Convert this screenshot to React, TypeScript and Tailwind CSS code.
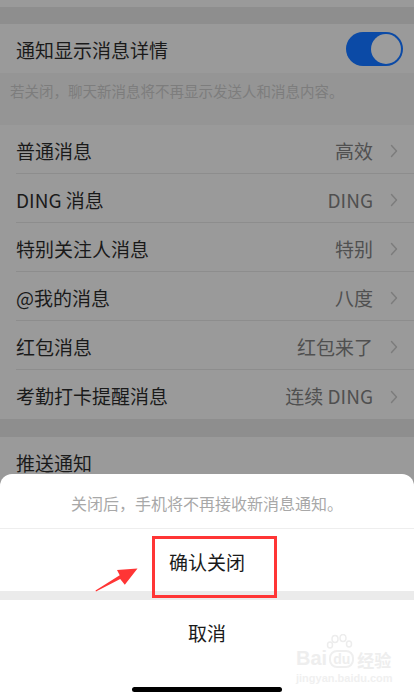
import React from "react";

function Chevron() {
  return (
    <svg width="8" height="14" viewBox="0 0 8 14" className="ml-[17px] shrink-0">
      <polyline points="1.5,1.5 6.5,7 1.5,12.5" fill="none" stroke="#7c7c7c" strokeWidth="1.4" strokeLinecap="round" strokeLinejoin="round" />
    </svg>
  );
}

function Switch() {
  return (
    <div className="w-[57px] h-[34px] rounded-full bg-[#0b4aa6] relative shrink-0">
      <div className="absolute right-[2px] top-[2px] w-[30px] h-[30px] rounded-full bg-[#9c9c9c]" />
    </div>
  );
}

const rows: [string, string][] = [
  ["普通消息", "高效"],
  ["DING 消息", "DING"],
  ["特别关注人消息", "特别"],
  ["@我的消息", "八度"],
  ["红包消息", "红包来了"],
  ["考勤打卡提醒消息", "连续 DING"],
];

export default function App() {
  return (
    <div className="relative w-[414px] h-[693px] overflow-hidden bg-[#8e8e8e] font-['Noto_Sans_CJK_SC','Noto_Sans',sans-serif]">
      {/* previous row bottom */}
      <div className="mt-[-42px] h-[49px] bg-[#9a9a9a] flex items-center justify-end pr-[11px]">
        <Switch />
      </div>
      <div className="h-[17px]" />
      <div className="h-[49px] bg-[#9a9a9a] flex items-center pl-4 pr-[11px]">
        <span className="flex-1 pt-1 text-[19px] text-[#1a1a1a]">通知显示消息详情</span>
        <Switch />
      </div>
      <div className="h-[52px] bg-[#959595] pl-[10px] pt-[7px] text-[14.5px] text-[#7d7d7d]">
        若关闭，聊天新消息将不再显示发送人和消息内容。
      </div>
      <div className="bg-[#9a9a9a] pl-4">
        {rows.map(([t, v], i) => (
          <div
            key={t}
            className={
              i < rows.length - 1
                ? "h-[49px] flex items-center pr-4 pt-1 border-b border-[#8d8d8d]"
                : "h-[49px] flex items-center pr-4 pt-1"
            }
          >
            <span className="flex-1 text-[19px] text-[#1a1a1a]">{t}</span>
            <span className="text-[19px] text-[#505050]">{v}</span>
            <Chevron />
          </div>
        ))}
      </div>
      <div className="h-[18px]" />
      <div className="h-[49px] bg-[#9a9a9a] flex items-center pl-4 pt-1">
        <span className="text-[19px] text-[#1a1a1a]">推送通知</span>
      </div>

      {/* action sheet */}
      <div className="absolute left-0 right-0 bottom-0 h-[219px] bg-white rounded-t-[12px] flex flex-col">
        <div className="h-[55px] flex items-center justify-center pt-1 border-b border-[#eeeeee] text-[16px] text-[#a8a8a8]">
          关闭后，手机将不再接收新消息通知。
        </div>
        <div className="h-[62px] flex items-center justify-center pt-1 text-[19px] text-[#1a1a1a]">确认关闭</div>
        <div className="h-[9px] bg-[#ebebeb]" />
        <div className="h-[62px] flex items-center justify-center pt-1 text-[19px] text-[#1a1a1a]">取消</div>
        <div className="h-[31px] flex justify-center pt-[25px]">
          <div className="w-[150px] h-[5px] rounded-full bg-black" />
        </div>
      </div>

      {/* red annotation box */}
      <div className="absolute left-[152px] top-[536px] w-[125px] h-[62px] border-[3px] border-[#ff3535]" />
      {/* red arrow */}
      <svg className="absolute left-0 top-0" width="414" height="693" viewBox="0 0 414 693">
        <polygon
          points="96,591.5 120.2,579 124.8,584.8 137.5,568.5 117,570 119.7,575.2 95.5,590.5"
          fill="#ff3535"
        />
      </svg>

      {/* watermark */}
      <svg className="absolute left-[326px] top-[634px]" width="28" height="18" viewBox="0 0 28 18">
        <g fill="none" stroke="#ededed" strokeWidth="1.5">
          <ellipse cx="9" cy="5" rx="3" ry="3.5" />
          <ellipse cx="17" cy="4" rx="3" ry="3.5" />
          <ellipse cx="4" cy="11" rx="2.5" ry="3" />
          <ellipse cx="23" cy="10" rx="2.5" ry="3" />
        </g>
      </svg>
      <div className="absolute left-[296px] top-[648px] flex flex-col items-start text-[#eeeeee]">
        <div className="flex items-end leading-none">
          <span className="text-[20px] font-bold font-['Liberation_Sans',sans-serif]">Bai</span>
          <span className="ml-[2px] text-[14px] font-bold font-['Liberation_Sans',sans-serif] border-[2px] border-[#efefef] rounded-[8px] px-[2px]">du</span>
          <span className="ml-[3px] text-[17px] font-bold">经验</span>
        </div>
        <span className="mt-[5px] text-[11px] leading-none font-bold font-['Liberation_Sans',sans-serif] text-[#f0f0f0]">jingyan.baidu.com</span>
      </div>
    </div>
  );
}
